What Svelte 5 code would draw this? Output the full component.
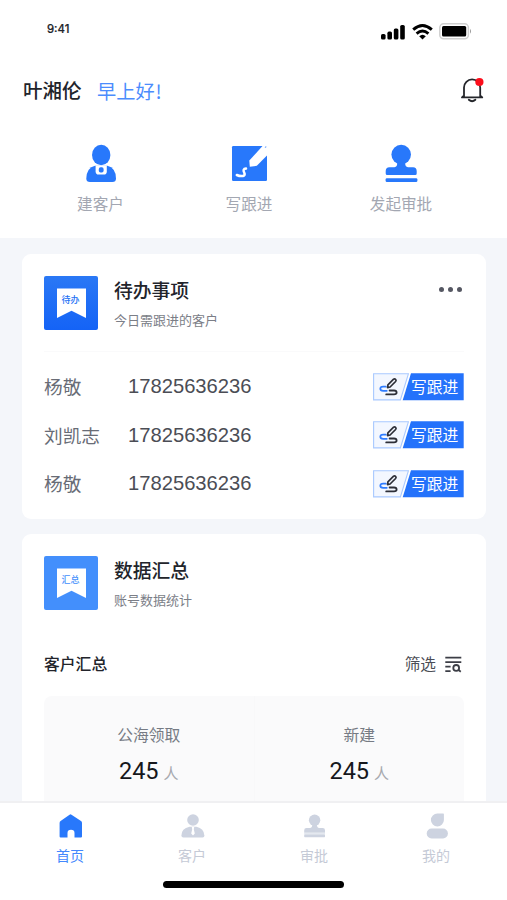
<script>
  const todos = [
    { name: '杨敬', phone: '17825636236' },
    { name: '刘凯志', phone: '17825636236' },
    { name: '杨敬', phone: '17825636236' }
  ];
  const stats = [
    { label: '公海领取', value: 245 },
    { label: '新建', value: 245 }
  ];
</script>

{#snippet badge(text, kind)}
  <div class="badge {kind}">
    <svg width="54" height="54" viewBox="0 0 54 54"><path d="M13 12.5h29v29.5l-14.5-7.2L13 42z" fill="#fff" /></svg>
    <span>{text}</span>
  </div>
{/snippet}

<div class="screen">
  <header>
    <div class="status">
      <span class="time">9:41</span>
      <div class="signals">
        <svg width="24" height="16" viewBox="0 0 24 16">
          <rect x="0" y="10" width="4.6" height="5.6" rx="1.6" />
          <rect x="6.4" y="7.6" width="4.6" height="8" rx="1.6" />
          <rect x="12.8" y="4.4" width="4.6" height="11.2" rx="1.6" />
          <rect x="19.2" y="1" width="4.6" height="14.6" rx="1.6" />
        </svg>
        <svg class="wifi" width="21" height="16" viewBox="0 0 21 16" fill="none" stroke="#000" stroke-width="2.9">
          <path d="M1.2 5.7Q10.5-2.6 19.8 5.7" />
          <path d="M4.6 9.6Q10.5 4.4 16.4 9.6" />
          <path d="M7.2 12.2Q10.5 9.2 13.8 12.2L10.5 15.5z" fill="#000" stroke="none" />
        </svg>
        <svg class="battery" width="33" height="17" viewBox="0 0 33 17">
          <rect x=".8" y=".8" width="28.6" height="15" rx="3.8" fill="#fff" stroke="#cfcfcf" stroke-width="1.5" />
          <rect x="3" y="3" width="24.2" height="10.6" rx="1.5" />
          <path d="M31 5.7q2 2.5 0 5z" fill="#999" />
        </svg>
      </div>
    </div>
    <div class="greeting">
      <span class="user">叶湘伦</span>
      <span class="hello">早上好<span class="bang">!</span></span>
      <svg class="bell" width="25" height="26" viewBox="0 0 25 26" fill="none" stroke="#24262b" stroke-width="1.8" stroke-linecap="round" stroke-linejoin="round">
        <path d="M4 19.5V10.5a8.1 8.1 0 0 1 16.2 0V19.5M2 20.4L4 18.4M22.2 20.4L20.2 18.4M2 20.4H22.2M8.8 22.8Q12.1 25.6 15.4 22.8" />
        <circle cx="19.4" cy="5" r="4.1" fill="#fc0d1b" stroke="none" />
      </svg>
    </div>
    <nav class="actions">
      <div class="action first">
        <svg width="38" height="40" viewBox="0 0 38 40" fill="#2878fb">
          <ellipse cx="19.2" cy="11" rx="9.2" ry="10.2" />
          <path d="M13 21.8Q4.5 24 4.3 34.5Q4.3 38 8 38H30.4Q34 38 34 34.5Q33.9 24 25.4 21.8z" />
          <path d="M13.6 21.6H24.8V27.5Q24.8 30.6 21.8 30.6H16.6Q13.6 30.6 13.6 27.5z" fill="#fff" />
          <rect x="16.8" y="23.2" width="4.8" height="5.4" rx="1.8" />
        </svg>
        <span>建客户</span>
      </div>
      <div class="action second">
        <svg width="38" height="40" viewBox="0 0 38 40">
          <rect x="2" y="2" width="35" height="35" rx="1.2" fill="#2878fb" />
          <path d="M33.4 1L38.5 1V10L26.8 21.8L19.8 22.7L19.3 16.6z" fill="#fff" />
          <path d="M34.6 3.4L36.2 2V3.4z" fill="#2878fb" />
          <path d="M6.8 31Q9.8 32.4 13 32Q15.6 31.2 14.2 28.6Q12.3 25 16 24.6" fill="none" stroke="#fff" stroke-width="2.5" stroke-linecap="round" />
        </svg>
        <span>写跟进</span>
      </div>
      <div class="action third">
        <svg width="38" height="40" viewBox="0 0 38 40" fill="#2878fb">
          <circle cx="19.2" cy="10.6" r="9.8" />
          <path d="M15.4 18H23Q23 23.2 26 23.2H31Q34.7 23.2 34.7 27V29.5Q34.7 31 33.2 31H5.2Q3.7 31 3.7 29.5V27Q3.7 23.2 7.4 23.2H12.4Q15.4 23.2 15.4 18z" />
          <rect x="3.6" y="34.3" width="31.8" height="3.7" rx="1.3" />
        </svg>
        <span>发起审批</span>
      </div>
    </nav>
  </header>

  <main>
    <section class="card todo">
      <div class="card-head">
        {@render badge('待办', 'deep')}
        <div class="titles">
          <h2>待办事项</h2>
          <p>今日需跟进的客户</p>
        </div>
        <div class="dots"><i></i><i></i><i></i></div>
      </div>
      <ul>
        {#each todos as t}
          <li>
            <span class="name">{t.name}</span>
            <span class="phone">{t.phone}</span>
            <div class="follow">
              <svg width="91" height="28" viewBox="0 0 91 28">
                <path d="M.6 .8H35.4L27.4 26.9H.6z" fill="#f3f7ff" stroke="#a9c9ff" stroke-width="1.1" />
                <path d="M38 .3H90.7V27.3H29.7z" fill="#2472fb" />
                <g fill="none" stroke-linecap="round" stroke-linejoin="round">
                  <path d="M12.8 13.7H10.2Q7.3 13.8 7.3 15.8T10.2 17.8H13.8" stroke="#2f7cff" stroke-width="1.7" />
                  <path d="M16.6 17.5H21Q23.6 17.6 23.6 19.5T21 21.4H13.2" stroke="#2d2f38" stroke-width="1.8" />
                  <path d="M14.6 14.6L14.9 11.9L20.6 6.2Q21.7 5.4 22.7 6.5Q23.5 7.5 22.6 8.5L17.1 14z" stroke="#2d2f38" stroke-width="1.7" />
                </g>
              </svg>
              <span>写跟进</span>
            </div>
          </li>
        {/each}
      </ul>
    </section>

    <section class="card summary">
      <div class="card-head">
        {@render badge('汇总', 'light')}
        <div class="titles">
          <h2>数据汇总</h2>
          <p>账号数据统计</p>
        </div>
      </div>
      <div class="subhead">
        <h3>客户汇总</h3>
        <span>筛选</span>
        <svg width="17" height="17" viewBox="0 0 17 17" fill="none" stroke="#3c3e46" stroke-width="1.8">
          <path d="M.3 1.6H16.3M.3 6.1H16.3M.3 10.6H5.6M.3 15.1H5.6" />
          <circle cx="11.2" cy="11.9" r="2.9" />
          <path d="M13.2 13.8L15.8 15.7" />
        </svg>
      </div>
      <div class="panel">
        {#each stats as s}
          <div class="stat">
            <span class="label">{s.label}</span>
            <div class="value"><b>{s.value}</b><em>人</em></div>
          </div>
        {/each}
      </div>
    </section>
  </main>

  <footer>
    <div class="tabs">
      <div class="tab active">
        <svg width="26" height="26" viewBox="0 0 26 26" fill="#2878fb">
          <path d="M13 1.4Q13.8 1.2 14.5 1.7L24 8Q25 8.7 25 10V23.5Q25 24.6 24 24.6H17.5V20Q17.5 16.8 14 16.8T10.5 20V24.6H3.6Q2.6 24.6 2.6 23.5V10Q2.6 8.7 3.6 8L12.2 1.9z" />
        </svg>
        <span>首页</span>
      </div>
      <div class="tab">
        <svg width="26" height="26" viewBox="0 0 26 26" fill="#cdd3e0">
          <circle cx="14" cy="7" r="5.8" />
          <path d="M10.5 13.8Q2.4 15.5 2.4 22.6Q2.4 24.6 4.4 24.6H23.6Q25.5 24.6 25.4 22.6Q25 15.5 17.5 13.8z" />
          <path d="M12.8 14H15.2L14.8 16.2L15.8 20.5L14 22.6L12.2 20.5L13.2 16.2z" fill="#fff" />
        </svg>
        <span>客户</span>
      </div>
      <div class="tab">
        <svg width="26" height="26" viewBox="0 0 26 26" fill="#cdd3e0">
          <circle cx="13.6" cy="7.3" r="5.7" />
          <path d="M11.4 11H15.8Q15.8 15 18.4 15H21.7Q24 15 24 17.2V19.8H3.2V17.2Q3.2 15 5.5 15H8.8Q11.4 15 11.4 11z" />
          <rect x="3.2" y="21.2" width="20.8" height="3" rx=".6" />
          <rect x="3.2" y="19.8" width="20.8" height="1.4" fill="#e4e8f0" />
        </svg>
        <span>审批</span>
      </div>
      <div class="tab">
        <svg width="26" height="26" viewBox="0 0 26 26" fill="#cdd3e0">
          <path d="M14.4 .5H20.3Q20.9 .5 20.9 1.2V7A6.5 6.5 0 1 1 14.4 .5z" />
          <rect x="3.7" y="15.6" width="21.2" height="9.8" rx="4.9" />
        </svg>
        <span>我的</span>
      </div>
    </div>
    <div class="indicator"></div>
  </footer>
</div>

<style>
  :global(body) { margin: 0; background: #fff; }
  .screen {
    width: 507px; height: 900px; overflow: hidden;
    display: flex; flex-direction: column;
    background: #f4f6fa; color: #22242b;
    font-family: 'Noto Sans CJK SC', sans-serif;
  }
  h2, h3, p, ul { margin: 0; padding: 0; }
  header { flex: none; height: 238px; background: #fff; box-sizing: border-box; }
  .status { height: 62px; padding: 0 35px 0 47px; display: flex; justify-content: space-between; align-items: center; box-sizing: border-box; }
  .time { font: 500 11.3px/12px Inter, sans-serif; margin-bottom: 5px; -webkit-text-stroke: .2px; }
  .signals { display: flex; align-items: center; height: 18px; margin-top: 1px; }
  .wifi { margin-left: 7px; }
  .battery { margin-left: 6px; }
  .greeting { height: 56px; display: flex; align-items: center; padding: 0 22px 0 23px; }
  .user { font-size: 19.5px; font-weight: 500; line-height: 28px; }
  .hello { font-size: 19.2px; line-height: 28px; color: #4b8cfd; margin: 1px 0 0 15.5px; }
  .bang { margin-left: 1px; }
  .bell { margin-left: auto; }
  .actions { display: flex; padding-top: 26px; }
  .action { width: 152px; display: flex; flex-direction: column; align-items: center; font-size: 15.6px; line-height: 22px; color: #a3a7b2; }
  .action svg { margin-bottom: 8px; }
  .first { margin-left: 24.5px; }
  .second { width: 145px; }
  .third { width: 159px; }

  main { height: 563px; flex: none; overflow: hidden; padding: 16px 21px 0 22px; box-sizing: border-box; }
  .card { background: #fff; border-radius: 9px; padding: 22px; box-sizing: border-box; }
  .todo { height: 265px; margin-bottom: 15px; }
  .summary { height: 320px; }
  .card-head { display: flex; height: 54px; }
  .badge { width: 54px; height: 54px; border-radius: 2px; position: relative; overflow: hidden; }
  .badge svg { display: block; }
  .badge span { position: absolute; left: 0; width: 53px; top: 18px; text-align: center; font-size: 9px; line-height: 12px; font-weight: 500; }
  .deep { background: linear-gradient(#2a78f5, #1463f6); color: #2472f5; }
  .light { background: #438ffc; color: #438ffc; }
  .titles { margin-left: 16px; flex: 1; }
  h2 { font-size: 18.8px; line-height: 28px; font-weight: 500; }
  p { font-size: 13px; line-height: 18px; margin-top: 7px; color: #7b7e87; }
  .dots { display: flex; gap: 3.8px; padding: 11px 2px 0 0; }
  .dots i { width: 5.2px; height: 5.2px; border-radius: 50%; background: #555762; }
  ul { list-style: none; margin-top: 21px; border-top: 1px solid #fafafb; padding-top: 10.5px; }
  li { display: flex; align-items: center; height: 48.5px; }
  .name { width: 84px; font-size: 18.7px; line-height: 28px; color: #686c76; margin-top: -1px; }
  .phone { font: 20.2px/28px 'Liberation Sans', sans-serif; color: #4b4d55; margin-top: -1px; }
  .follow { margin-left: auto; position: relative; width: 91px; height: 28px; }
  .follow svg { display: block; }
  .follow span { position: absolute; left: 38px; top: 3px; font-size: 15.8px; line-height: 22px; color: #fff; white-space: nowrap; }

  .subhead { display: flex; align-items: center; margin-top: 42px; height: 24px; padding-right: 2px; }
  h3 { flex: 1; font-size: 15.8px; line-height: 24px; font-weight: 500; }
  .subhead span { font-size: 15.7px; line-height: 24px; color: #4b4d55; margin-right: 9px; }
  .panel { display: flex; margin-top: 20px; height: 150px; background: #fafafb; border-radius: 8px; }
  .stat { flex: 1; display: flex; flex-direction: column; align-items: center; padding-top: 27px; }
  .stat + .stat { border-left: 1px solid #f8f8f9; }
  .label { font-size: 15.8px; line-height: 24px; color: #767b84; }
  .value { display: flex; align-items: baseline; margin-top: 10px; line-height: 28px; }
  b { font: 400 23.5px/28px Roboto, sans-serif; color: #15171c; }
  em { font-style: normal; font-size: 15px; margin-left: 5px; color: #a7a9af; }

  footer { flex: none; height: 99px; background: #fff; border-top: 2px solid #f0f0f2; box-sizing: border-box; }
  .tabs { display: flex; padding: 10px 10px 0 9px; height: 78px; box-sizing: border-box; }
  .tab { flex: 1; display: flex; flex-direction: column; align-items: center; font-size: 14px; line-height: 20px; color: #c5cad6; }
  .tab svg { margin-bottom: 5.5px; }
  .active { color: #4388fd; }
  .indicator { width: 181px; height: 7px; border-radius: 4px; background: #000; margin: 0 auto; }
</style>
